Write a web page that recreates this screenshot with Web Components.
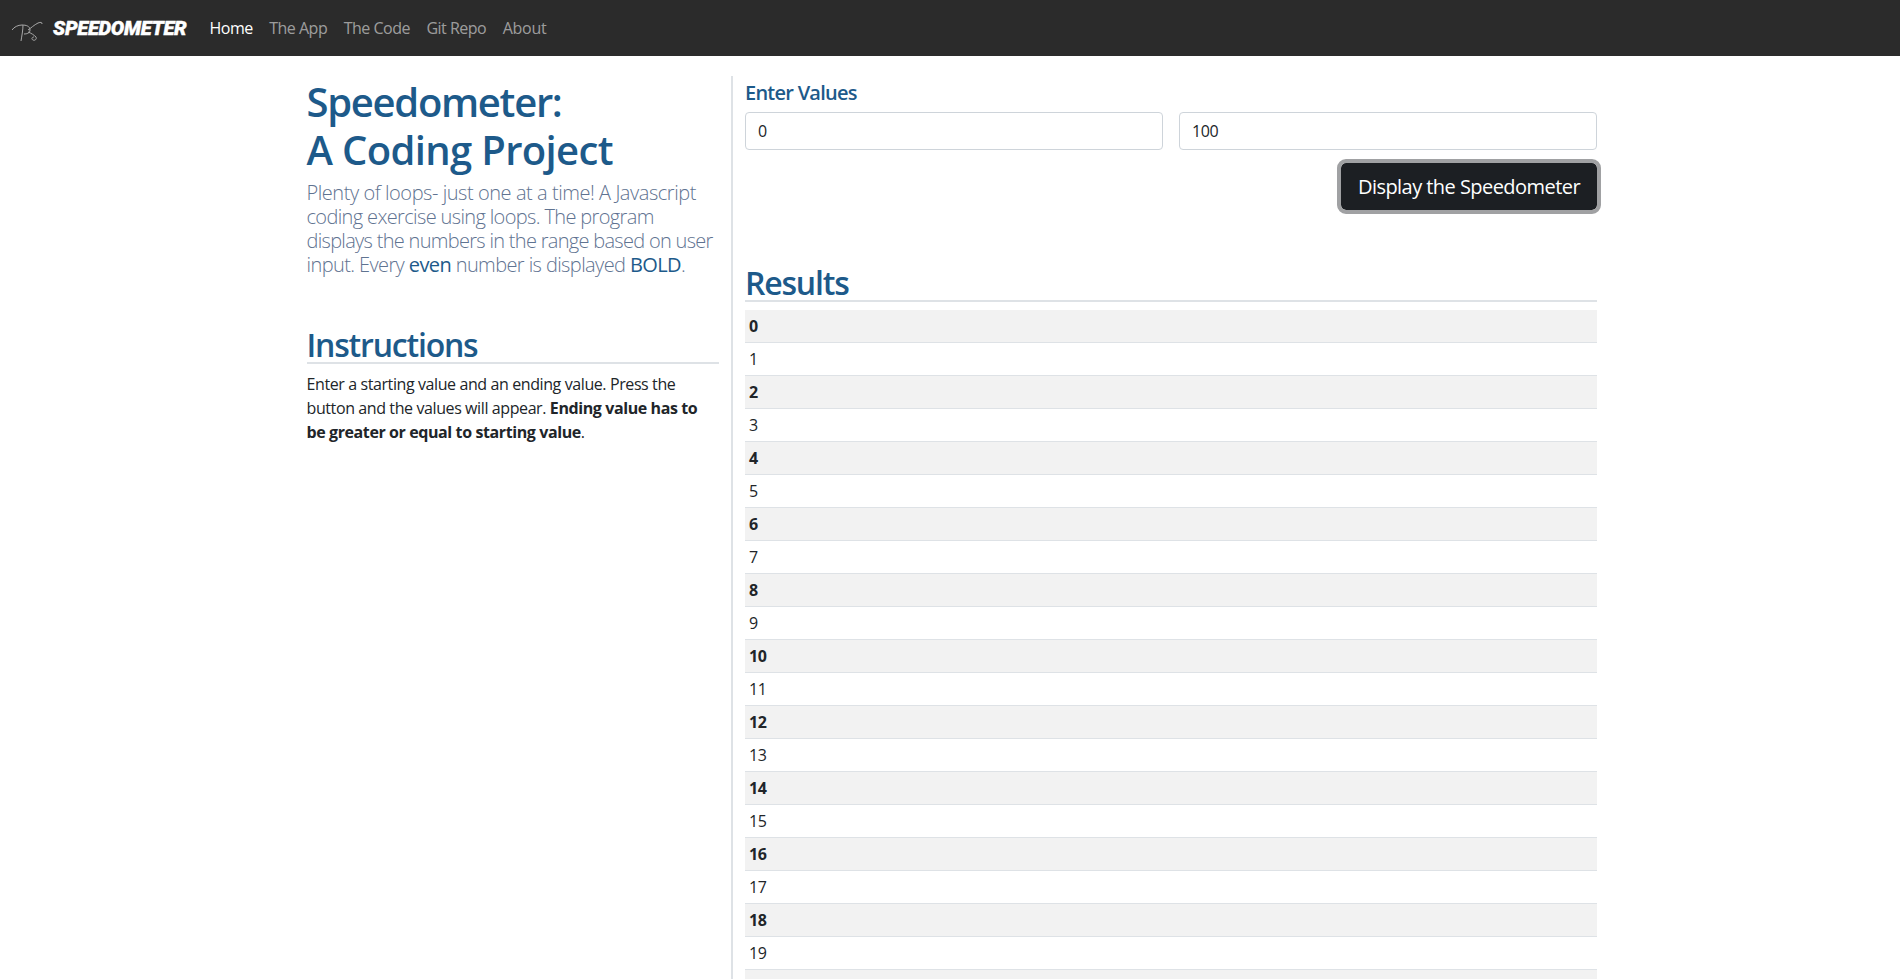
<!DOCTYPE html>
<html lang="en">
<head>
<meta charset="utf-8">
<title>Speedometer</title>
<style>
    html, body { margin: 0; height: 100%; overflow: hidden; background: #fff; }
    body { font-family: "Open Sans", "Noto Sans", sans-serif; font-size: 16px; color: #212529; }
</style>
</head>
<body>
<app-navbar></app-navbar>
<app-page>
    <intro-panel slot="left"></intro-panel>
    <value-form slot="right"></value-form>
    <results-table slot="right" end="20"></results-table>
</app-page>

<script>
class AppNavbar extends HTMLElement {
    constructor() {
        super();
        this.attachShadow({ mode: 'open' });
        this.shadowRoot.innerHTML = `
            <style>
                :host { display: block; background: #2b2b2b; height: 56px; }
                nav { display: flex; align-items: center; height: 100%; padding-left: 12px; }
                svg { width: 31px; height: 22px; margin-right: 10px; margin-top: 3px; flex: none; }
                .brand {
                    font: italic 900 20px Roboto, "Liberation Sans", sans-serif;
                    color: #fff;
                    -webkit-text-stroke: .4px #fff;
                    width: 133px;
                    flex: none;
                    margin-right: 23.5px;
                    white-space: nowrap;
                    letter-spacing: -.25px;
                }
                a { color: rgba(255,255,255,.55); text-decoration: none; margin-right: 16.5px; font-size: 16px; letter-spacing: -.5px; }
                a.active { color: #fff; }
                a:last-child { letter-spacing: -.3px; }
            </style>
            <nav>
                <svg viewBox="0 0 31 22" fill="none" stroke="#a8a8a8" stroke-width="1">
                    <path d="M0 11C2 8 6 6 10 6c4 0 8 1 8 5 0 3-3 4-6 4"/>
                    <path d="M11 6c0 5-1.200 11-2 16"/>
                    <path d="M16 11c3-2 6-5 10-7 3-1 4-1 4 1"/>
                    <path d="M16 13c3 1 6 3 8 5 1 2-1 4-3 3-2-1-1-3 1-3"/>
                </svg>
                <span class="brand">SPEEDOMETER</span>
                <a class="active" href="#">Home</a>
                <a href="#">The App</a>
                <a href="#">The Code</a>
                <a href="#">Git Repo</a>
                <a href="#">About</a>
            </nav>
        `;
    }
}

class AppPage extends HTMLElement {
    constructor() {
        super();
        this.attachShadow({ mode: 'open' });
        this.shadowRoot.innerHTML = `
            <style>
                :host { display: block; height: calc(100vh - 56px); overflow: hidden; }
                .row { width: 1320px; margin: 0 auto; display: grid; grid-template-columns: 441px 879px; padding-top: 20px; }
                .left { padding: 0 12px 0 16.5px; }
                .right { border-left: 2px solid #dee2e6; padding: 0 13px 0 12px; min-height: 1000px; }
            </style>
            <div class="row">
                <div class="left"><slot name="left"></slot></div>
                <div class="right"><slot name="right"></slot></div>
            </div>
        `;
    }
}

class IntroPanel extends HTMLElement {
    constructor() {
        super();
        this.attachShadow({ mode: 'open' });
        this.shadowRoot.innerHTML = `
            <style>
                :host { display: block; }
                h1 { margin: 2px 0 7px; color: #1d5a8a; font-size: 40px; font-weight: 600; line-height: 48px; letter-spacing: -.65px; }
                h1 span { display: block; }
                h1 .first { letter-spacing: -1.3px; }
                .lead { margin: 0 0 47px; font-size: 20px; font-weight: 300; line-height: 24px; color: #5f7391; white-space: nowrap; }
                .lead span { display: block; }
                .lead b { font-weight: 400; color: #1d5a8a; }
                h2 { margin: 0 0 8px; padding-top: 4px; color: #1d5a8a; font-size: 32px; font-weight: 600; line-height: 34px; letter-spacing: -1.2px; border-bottom: 2px solid #dee2e6; }
                p.text { margin: 0; line-height: 24px; letter-spacing: -.4px; }
            </style>
            <h1><span class="first">Speedometer:</span><span>A Coding Project</span></h1>
            <div class="lead">
                <span style="letter-spacing:-.45px">Plenty of loops- just one at a time! A Javascript</span>
                <span style="letter-spacing:-.64px">coding exercise using loops. The program</span>
                <span style="letter-spacing:-.7px">displays the numbers in the range based on user</span>
                <span style="letter-spacing:-.6px">input. Every <b>even</b> number is displayed <b>BOLD</b>.</span>
            </div>
            <h2>Instructions</h2>
            <p class="text">Enter a starting value and an ending value. Press the button and the values will appear. <b>Ending value has to be greater or equal to starting value</b>.</p>
        `;
    }
}

class ValueForm extends HTMLElement {
    constructor() {
        super();
        this.attachShadow({ mode: 'open' });
        this.shadowRoot.innerHTML = `
            <style>
                :host { display: block; padding-top: 5px; }
                h5 { margin: 0 0 7px; color: #1d5a8a; font-size: 20px; font-weight: 600; line-height: 24px; letter-spacing: -.75px; }
                .inputs { display: grid; grid-template-columns: 418px 418px; gap: 16px; }
                input {
                    box-sizing: border-box; width: 100%; height: 38px; padding: 6px 12px;
                    border: 1px solid #ced4da; border-radius: 4px;
                    font: 16px "Open Sans", sans-serif; letter-spacing: -.4px; color: #212529;
                }
                .actions { display: flex; justify-content: flex-end; margin-top: 13px; }
                button {
                    width: 256px; height: 47px; padding: 0; border: 0; border-radius: 5px;
                    background: #1c1f23; color: #fff;
                    font: 20px "Open Sans", sans-serif; letter-spacing: -.55px;
                    outline: 4px solid #a0a1a3; outline-offset: 0;
                }
            </style>
            <h5>Enter Values</h5>
            <div class="inputs">
                <input value="0">
                <input value="100">
            </div>
            <div class="actions"><button>Display the Speedometer</button></div>
        `;
    }
}

class ResultsTable extends HTMLElement {
    constructor() {
        super();
        this.attachShadow({ mode: 'open' });
        const end = Number(this.getAttribute('end'));
        let rows = '';
        for (let i = 0; i <= end; i++) {
            rows += `<div class="num ${i % 2 === 0 ? 'even' : ''}">${i}</div>`;
        }
        this.shadowRoot.innerHTML = `
            <style>
                :host { display: block; margin-top: 52px; }
                h2 { margin: 0 0 8px; padding-top: 4px; color: #1d5a8a; font-size: 32px; font-weight: 600; line-height: 34px; letter-spacing: -1.2px; border-bottom: 2px solid #dee2e6; }
                .num { height: 32px; line-height: 32px; padding-left: 4px; border-bottom: 1px solid #dee2e6; letter-spacing: -.35px; }
                .even { background: #f2f2f2; font-weight: 700; }
            </style>
            <h2>Results</h2>
            <div>${rows}</div>
        `;
    }
}

customElements.define('app-navbar', AppNavbar);
customElements.define('app-page', AppPage);
customElements.define('intro-panel', IntroPanel);
customElements.define('value-form', ValueForm);
customElements.define('results-table', ResultsTable);
</script>
</body>
</html>
